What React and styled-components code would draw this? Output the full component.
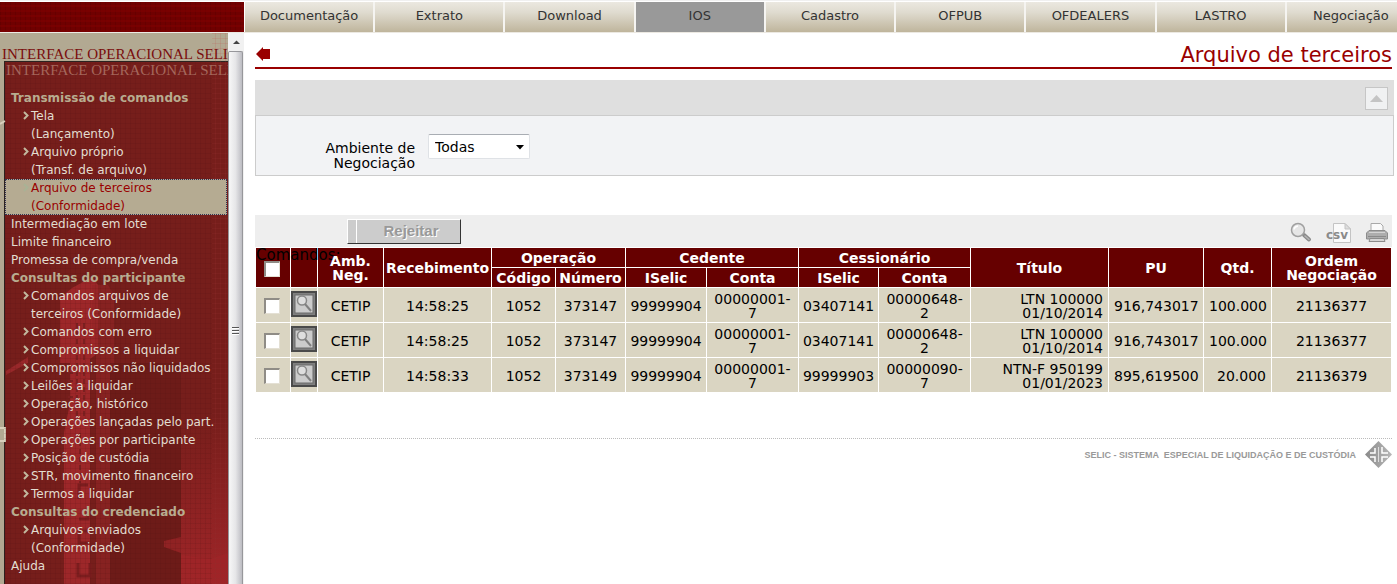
import React from 'react';
import styled, { createGlobalStyle } from 'styled-components';

const GlobalStyle = createGlobalStyle`
  * {
    box-sizing: border-box;
  }

  body {
    margin: 0;
    background-color: white;
    font-family: "DejaVu Sans", Verdana, sans-serif;
    font-size: 14px;
    color: black;
  }
`;

const Page = styled.div`
  display: flex;
  flex-direction: column;
  height: 100vh;
  overflow: hidden;
  border-top: 1px solid #f0f0f0;
`;

const TopBar = styled.header`
  display: flex;
  flex-shrink: 0;
  height: 32px;
  padding-top: 1px;
  border-bottom: 1px solid #ece9e2;
`;

const Brand = styled.div`
  flex: 0 0 244px;
  background-color: #700000;
  background-image:
    repeating-linear-gradient(0deg, rgba(130, 0, 0, 0.5) 0 2px, transparent 2px 5px),
    repeating-linear-gradient(90deg, rgba(60, 0, 0, 0.2) 0 1px, transparent 1px 5px);
`;

const TabsClip = styled.nav`
  flex: 1;
  min-width: 0;
  padding-left: 1px;
  overflow: hidden;
`;

const Tabs = styled.div`
  display: grid;
  grid-template-columns: repeat(9, 1fr);
  gap: 2px;
  width: calc(100% + 18px);
  height: 100%;
  background-color: #f5f4f1;
`;

const Tab = styled.a`
  padding-top: 5px;
  font-size: 13px;
  line-height: 18px;
  text-align: center;
  text-decoration: none;
  color: #333333;
  background: ${props => props.$active ? '#999999' : 'linear-gradient(#ebe8e0, #dfdbcf 35%, #bfb59c)'};
`;

const Columns = styled.div`
  display: flex;
  flex: 1;
  min-height: 0;
`;

const Sidebar = styled.aside`
  position: relative;
  flex: 0 0 228px;
  overflow: hidden;
  background-color: #b2a992;
`;

const Artwork = styled.svg`
  position: absolute;
  top: 0;
  left: 0;
`;

const Banner = styled.div`
  position: relative;
  height: 56px;
  padding: 13px 0 0 2px;
  overflow: hidden;
  font-family: "Liberation Serif", serif;
  font-size: 15px;
  line-height: 16px;
  white-space: nowrap;
  color: #7a0d0d;
`;

const BannerShadow = styled.div`
  padding-left: 4px;
  color: #a4675c;
`;

const Menu = styled.ul`
  position: relative;
  margin: 0 1px 0 5px;
  padding: 0;
  list-style: none;
  font-size: 12px;
  line-height: 18px;
`;

const MenuTitle = styled.li`
  padding-left: 6px;
  font-weight: bold;
  color: #b8ac90;
`;

const MenuItem = styled.li`
  padding-left: ${props => props.$sub ? '26px' : '6px'};
  color: #e3ddd0;
  white-space: nowrap;

  ${props => props.$selected && `
    background-color: #b5ab92;
    color: #990000;
    outline: 1px dotted #333355;
    outline-offset: -1px;
  `}

  a {
    position: relative;
    display: block;
    color: inherit;
    text-decoration: none;
  }
`;

const Chevron = styled.svg`
  position: absolute;
  left: -8px;
  top: 4px;
`;

const Scroll = styled.div`
  display: flex;
  flex-direction: column;
  flex: 0 0 16px;
  background-color: #f1f1f1;
`;

const ScrollUp = styled.svg`
  flex: 0 0 18px;
  width: 16px;
`;

const Thumb = styled.div`
  display: flex;
  align-items: center;
  justify-content: center;
  flex: 1;
  margin-right: 1px;
  padding-top: 26px;
  border: 1px solid #97979b;
  border-bottom: none;
  border-radius: 2px 2px 0 0;
  background: linear-gradient(90deg, #f7f7f7, #e6e6e8 50%, #bcbcc2);
`;

const Main = styled.main`
  flex: 1;
  min-width: 0;
  padding: 8px 3px 0 11px;
`;

const TitleRow = styled.div`
  display: flex;
  align-items: flex-end;
  justify-content: space-between;
  height: 28px;
  margin-right: 2px;
  border-bottom: 2px solid #990000;
`;

const Back = styled.button`
  display: flex;
  padding: 0 0 6px 1px;
  border: none;
  background: none;
`;

const Title = styled.h1`
  margin: 0;
  font-size: 21px;
  line-height: 24px;
  font-weight: normal;
  color: #990000;
`;

const PanelHead = styled.div`
  display: flex;
  align-items: center;
  justify-content: flex-end;
  height: 35px;
  margin-top: 11px;
  padding: 2px 6px 0 0;
  background-color: #dfdfdf;
`;

const Collapse = styled.button`
  display: flex;
  align-items: center;
  justify-content: center;
  width: 23px;
  height: 23px;
  padding: 0;
  border: 1px solid #c6c6c6;
  background-color: #f0f1f2;
`;

const PanelBody = styled.div`
  display: flex;
  height: 61px;
  padding-top: 18px;
  border: 1px solid #cccccc;
  background-color: #f2f3f5;
`;

const FieldLabel = styled.label`
  width: 159px;
  margin-right: 13px;
  padding: 7px 0 0 50px;
  line-height: 15px;
  text-align: right;
`;

const SelectBox = styled.div`
  position: relative;
  height: 25px;
`;

const Select = styled.select`
  appearance: none;
  width: 102px;
  height: 25px;
  padding: 0 6px;
  border: 1px solid #dfe2e6;
  border-top-color: #a9adb3;
  border-radius: 2px;
  background-color: white;
  font-family: inherit;
  font-size: 14px;
  color: black;
`;

const SelectArrow = styled.svg`
  position: absolute;
  right: 6px;
  top: 11px;
  pointer-events: none;
`;

const Toolbar = styled.div`
  position: relative;
  display: flex;
  align-items: center;
  height: 32px;
  margin: 39px 2px 0 0;
  padding: 0 4px 0 92px;
  background-color: #eeeeee;
`;

const Reject = styled.button`
  width: 114px;
  height: 25px;
  padding: 0 0 2px 14px;
  border: 1px solid white;
  border-right-color: #333333;
  border-bottom-color: #333333;
  background: linear-gradient(90deg, #cccccc 8px, white 8px 9px, #cccccc 9px);
  font-family: "Liberation Sans", Arial, sans-serif;
  font-size: 15px;
  font-weight: bold;
  color: #999999;
  text-shadow: 1px 1px 0 white;
`;

const Tools = styled.div`
  display: flex;
  gap: 14px;
  margin-left: auto;
`;

const Tool = styled.button`
  display: flex;
  padding: 3px 0 0;
  border: none;
  background: none;
`;

const Commands = styled.div`
  position: absolute;
  left: 1px;
  top: 31px;
  font-size: 15px;
  line-height: 18px;
`;

const Table = styled.table`
  width: calc(100% - 2px);
  table-layout: fixed;
  border-collapse: separate;
  border-spacing: 1px;
  line-height: 14px;
`;

const Th = styled.th`
  height: 19px;
  padding: 0;
  background-color: #660000;
  color: white;

  span {
    position: relative;
  }
`;

const Td = styled.td`
  height: 34px;
  padding: ${props => props.$right ? '2px 5px 0' : '2px 0 0'};
  background-color: #dad5c2;
  text-align: ${props => props.$right ? 'right' : 'center'};
  vertical-align: ${props => props.$top ? 'top' : 'middle'};
`;

const Check = styled.input`
  appearance: none;
  display: block;
  width: 16px;
  height: 16px;
  margin: ${props => props.$head ? '2px 0 0 8px' : '0 0 0 8px'};
  border: 1px solid #e4e0d4;
  border-top: 2px solid #8f8c86;
  border-left: 2px solid #8f8c86;
  background-color: white;
`;

const Detail = styled.button`
  display: block;
  width: 26px;
  height: 26px;
  margin-top: 1px;
  padding: 0;
  border: none;
  background: none;
`;

const Footer = styled.footer`
  display: flex;
  align-items: center;
  justify-content: flex-end;
  gap: 9px;
  margin: 45px 2px 0 0;
  padding-top: 2px;
  border-top: 1px dotted #bbbbbb;
  font-family: "Liberation Sans", Arial, sans-serif;
  font-size: 9px;
  font-weight: bold;
  color: #999999;
`;

const tabs = ['Documentação', 'Extrato', 'Download', 'IOS', 'Cadastro', 'OFPUB', 'OFDEALERS', 'LASTRO', 'Negociação'];

const menu = [
  { title: 'Transmissão de comandos' },
  { sub: true, lines: ['Tela', '(Lançamento)'] },
  { sub: true, lines: ['Arquivo próprio', '(Transf. de arquivo)'] },
  { sub: true, selected: true, lines: ['Arquivo de terceiros', '(Conformidade)'] },
  { lines: ['Intermediação em lote'] },
  { lines: ['Limite financeiro'] },
  { lines: ['Promessa de compra/venda'] },
  { title: 'Consultas do participante' },
  { sub: true, lines: ['Comandos arquivos de', 'terceiros (Conformidade)'] },
  { sub: true, lines: ['Comandos com erro'] },
  { sub: true, lines: ['Compromissos a liquidar'] },
  { sub: true, lines: ['Compromissos não liquidados'] },
  { sub: true, lines: ['Leilões a liquidar'] },
  { sub: true, lines: ['Operação, histórico'] },
  { sub: true, lines: ['Operações lançadas pelo part.'] },
  { sub: true, lines: ['Operações por participante'] },
  { sub: true, lines: ['Posição de custódia'] },
  { sub: true, lines: ['STR, movimento financeiro'] },
  { sub: true, lines: ['Termos a liquidar'] },
  { title: 'Consultas do credenciado' },
  { sub: true, lines: ['Arquivos enviados', '(Conformidade)'] },
  { lines: ['Ajuda'] },
];

const widths = [34, 26, 65, 107, 63, 69, 80, 91, 79, 91, 137, 94, 67, 119];

const rows = [
  { time: '14:58:25', number: '373147', cessionary: '03407141', account: '00000648-', digit: '2', bond: 'LTN 100000', due: '01/10/2014', pu: '916,743017', qty: '100.000', order: '21136377' },
  { time: '14:58:25', number: '373147', cessionary: '03407141', account: '00000648-', digit: '2', bond: 'LTN 100000', due: '01/10/2014', pu: '916,743017', qty: '100.000', order: '21136377' },
  { time: '14:58:33', number: '373149', cessionary: '99999903', account: '00000090-', digit: '7', bond: 'NTN-F 950199', due: '01/01/2023', pu: '895,619500', qty: '20.000', order: '21136379' },
];

// tower and buildings behind the menu
function SidebarArt() {
  return (
    <Artwork width="228" height="900" aria-hidden="true">
      <defs>
        <pattern id="grid" width="5" height="5" patternUnits="userSpaceOnUse">
          <path d="M0 .5H5M.5 0V5" stroke="#4a1010" strokeOpacity=".12" />
        </pattern>
        <pattern id="fence" width="5" height="5" patternUnits="userSpaceOnUse">
          <path d="M0 .5H5M.5 0V5" stroke="#c04040" strokeOpacity=".14" />
        </pattern>
        <linearGradient id="dusk" x1="0" y1="0" x2="0" y2="1">
          <stop offset="0" stopColor="#a02528" stopOpacity="0" />
          <stop offset="1" stopColor="#a02528" />
        </linearGradient>
      </defs>
      <rect x="4" y="28" width="224" height="872" fill="#761e1b" />
      <path d="M4 28.5H228M4.500 28V900" stroke="#2c2320" />
      <path d="M0 91L5 88M0 395H5V408H0" stroke="#d8d0bc" strokeWidth="2" fill="none" />
      <path d="M6 338L28 324V330L6 342Z" fill="#98282a" />
      <path d="M60 265L72 255L92 244L98 252V320L90 326V552H64V400L70 370V330H60Z" fill="#a5292b" fillOpacity=".85" />
      <path d="M92 252H108L114 262V340H110V552H96V300H92Z" fill="#922426" fillOpacity=".6" />
      <path d="M110 330H181V552H110Z" fill="#681917" fillOpacity=".6" />
      <path d="M77 290V388M84 290V388M68 340H78M68 348H78M68 356H78M68 364H78M80 400V450" stroke="#7c2020" strokeWidth="2" strokeDasharray="5 3" />
      <path d="M88 452H79V466M88 478V486H79M88 498H79V510H90M78 530V543H90V530" stroke="#7c1d1e" strokeWidth="3" fill="none" />
      <path d="M181 380H228V552H181Z" fill="url(#dusk)" />
      <path d="M164 508L181 504V520L164 514ZM181 522L210 526L228 520V552H181Z" fill="#a02528" fillOpacity=".7" />
      <rect x="4" y="28" width="224" height="872" fill="url(#grid)" />
      <rect x="212" y="0" width="16" height="552" fill="url(#fence)" />
    </Artwork>
  );
}

function DetailIcon() {
  return (
    <svg width="26" height="26" viewBox="0 0 26 26" aria-hidden="true">
      <rect x="1" y="1" width="24" height="24" fill="#808080" stroke="#4a4a4a" strokeWidth="2" />
      <rect x="4" y="4" width="18" height="18" fill="#cccccc" stroke="#6a6a6a" />
      <circle cx="11" cy="9.500" r="4.500" fill="#dedede" stroke="#888888" strokeWidth="1.500" />
      <path d="M14 13L20 20" stroke="#808080" strokeWidth="2" />
    </svg>
  );
}

function SearchIcon() {
  return (
    <svg width="22" height="22" viewBox="0 0 22 22" aria-hidden="true">
      <path d="M14 13L19 17.500" stroke="#8a8a8a" strokeWidth="4" strokeLinecap="round" />
      <path d="M15 14L19 17.500" stroke="#b5b5b5" strokeWidth="1.500" strokeLinecap="round" />
      <circle cx="8" cy="8" r="6.500" fill="#e6e6e6" stroke="#a0a0a0" strokeWidth="1.500" />
      <path d="M4 7.500Q4.500 4.500 8 4" stroke="white" strokeWidth="1.500" fill="none" />
    </svg>
  );
}

function CsvIcon() {
  return (
    <svg width="26" height="22" viewBox="0 0 26 22" aria-hidden="true">
      <path d="M7.500 1.500H19L24.500 7V20.500H7.500Z" fill="#fafafa" stroke="#c4c4c4" />
      <path d="M19 1.500V7H24.500Z" fill="#dddddd" stroke="#c4c4c4" />
      <text x="0" y="17" fontFamily="DejaVu Sans, sans-serif" fontSize="12" fontWeight="bold" fill="#8a8a8a">csv</text>
    </svg>
  );
}

function PrinterIcon() {
  return (
    <svg width="22" height="22" viewBox="0 0 22 22" aria-hidden="true">
      <path d="M5 9V1.500H14.500L17 4V9" fill="#fafafa" stroke="#a8a8a8" />
      <path d="M3 8.500H19L21.500 11V17H.5V11Z" fill="#adadad" stroke="#8c8c8c" />
      <path d="M3 10.500H19" stroke="#d4d4d4" />
      <path d="M2 14.500H20" stroke="#8a8a8a" />
      <path d="M4 16.500H18L19 19.500H3Z" fill="#d6d6d6" stroke="#8c8c8c" />
    </svg>
  );
}

function FooterLogo() {
  return (
    <svg width="27" height="27" viewBox="0 0 27 27" aria-hidden="true">
      <defs>
        <linearGradient id="steel" x1="0" y1="0" x2="1" y2="0">
          <stop offset="0" stopColor="#8a8a8a" />
          <stop offset="1" stopColor="#b8b8b8" />
        </linearGradient>
      </defs>
      <path d="M13.500 0L27 13.500L13.500 27L0 13.500Z" fill="url(#steel)" />
      <path d="M10 7V12H5M17 6V12H23M10 21V16H5M17 21V16H23" stroke="white" strokeWidth="1.500" fill="none" />
      <path d="M13.500 6V21" stroke="#dddddd" />
    </svg>
  );
}

function App() {
  return (
    <Page>
      <GlobalStyle />
      <TopBar>
        <Brand />
        <TabsClip>
          <Tabs>
            {tabs.map(tab => <Tab key={tab} href="#" $active={tab === 'IOS'}>{tab}</Tab>)}
          </Tabs>
        </TabsClip>
      </TopBar>
      <Columns>
        <Sidebar>
          <SidebarArt />
          <Banner>
            <div>INTERFACE OPERACIONAL SELIC</div>
            <BannerShadow aria-hidden="true">INTERFACE OPERACIONAL SELIC</BannerShadow>
          </Banner>
          <Menu>
            {menu.map(item => item.title ? (
              <MenuTitle key={item.title}>{item.title}</MenuTitle>
            ) : (
              <MenuItem key={item.lines[0]} $sub={item.sub} $selected={item.selected}>
                <a href="#">
                  {item.sub && (
                    <Chevron width="6" height="9" aria-hidden="true">
                      <path d="M1 1L4.500 4.500L1 8" fill="none" stroke={item.selected ? '#a9b295' : '#c2b89e'} strokeWidth="2" />
                    </Chevron>
                  )}
                  {item.lines[0]}
                  {item.lines[1] && <br />}
                  {item.lines[1]}
                </a>
              </MenuItem>
            ))}
          </Menu>
        </Sidebar>
        <Scroll aria-hidden="true">
          <ScrollUp viewBox="0 0 16 18">
            <path d="M5 11L8.500 7.500L12 11Z" fill="#444444" />
          </ScrollUp>
          <Thumb>
            <svg width="8" height="10">
              <path d="M0 1.500H7M0 4.500H7M0 7.500H7" stroke="#555555" />
              <path d="M0 2.500H7M0 5.500H7M0 8.500H7" stroke="#ffffff" />
            </svg>
          </Thumb>
        </Scroll>
        <Main>
          <TitleRow>
            <Back aria-label="Voltar">
              <svg width="14" height="14"><path d="M0 7L7 0V2H14V12H7V14Z" fill="#990000" /></svg>
            </Back>
            <Title>Arquivo de terceiros</Title>
          </TitleRow>
          <PanelHead>
            <Collapse aria-label="Recolher">
              <svg width="13" height="7"><path d="M0 7L6.500 0L13 7Z" fill="#c4c4c4" /></svg>
            </Collapse>
          </PanelHead>
          <PanelBody>
            <FieldLabel htmlFor="market">Ambiente de Negociação</FieldLabel>
            <SelectBox>
              <Select id="market" defaultValue="Todas">
                <option>Todas</option>
              </Select>
              <SelectArrow width="8" height="5"><path d="M0 0H8L4 4.500Z" /></SelectArrow>
            </SelectBox>
          </PanelBody>
          <Toolbar>
            <Reject disabled>Rejeitar</Reject>
            <Tools>
              <Tool aria-label="Pesquisar"><SearchIcon /></Tool>
              <Tool aria-label="Exportar CSV"><CsvIcon /></Tool>
              <Tool aria-label="Imprimir"><PrinterIcon /></Tool>
            </Tools>
            <Commands>Comandos:</Commands>
          </Toolbar>
          <Table>
            <colgroup>
              {widths.map((width, i) => <col key={i} width={width} />)}
            </colgroup>
            <thead>
              <tr>
                <Th rowSpan="2"><Check $head type="checkbox" aria-label="Selecionar todos" /></Th>
                <Th rowSpan="2"></Th>
                <Th rowSpan="2"><span>Amb. Neg.</span></Th>
                <Th rowSpan="2">Recebimento</Th>
                <Th colSpan="2">Operação</Th>
                <Th colSpan="2">Cedente</Th>
                <Th colSpan="2">Cessionário</Th>
                <Th rowSpan="2">Título</Th>
                <Th rowSpan="2">PU</Th>
                <Th rowSpan="2">Qtd.</Th>
                <Th rowSpan="2">Ordem Negociação</Th>
              </tr>
              <tr>
                <Th>Código</Th>
                <Th>Número</Th>
                <Th>ISelic</Th>
                <Th>Conta</Th>
                <Th>ISelic</Th>
                <Th>Conta</Th>
              </tr>
            </thead>
            <tbody>
              {rows.map((row, i) => (
                <tr key={i}>
                  <Td><Check type="checkbox" aria-label={`Selecionar ${row.order}`} /></Td>
                  <Td $top><Detail aria-label="Detalhar"><DetailIcon /></Detail></Td>
                  <Td>CETIP</Td>
                  <Td>{row.time}</Td>
                  <Td>1052</Td>
                  <Td>{row.number}</Td>
                  <Td>99999904</Td>
                  <Td>00000001-<br />7</Td>
                  <Td>{row.cessionary}</Td>
                  <Td>{row.account}<br />{row.digit}</Td>
                  <Td $right>{row.bond}<br />{row.due}</Td>
                  <Td $right>{row.pu}</Td>
                  <Td $right>{row.qty}</Td>
                  <Td>{row.order}</Td>
                </tr>
              ))}
            </tbody>
          </Table>
          <Footer>
            <span>SELIC - SISTEMA &nbsp;ESPECIAL DE LIQUIDAÇÃO E DE CUSTÓDIA</span>
            <FooterLogo />
          </Footer>
        </Main>
      </Columns>
    </Page>
  );
}

export default App;
